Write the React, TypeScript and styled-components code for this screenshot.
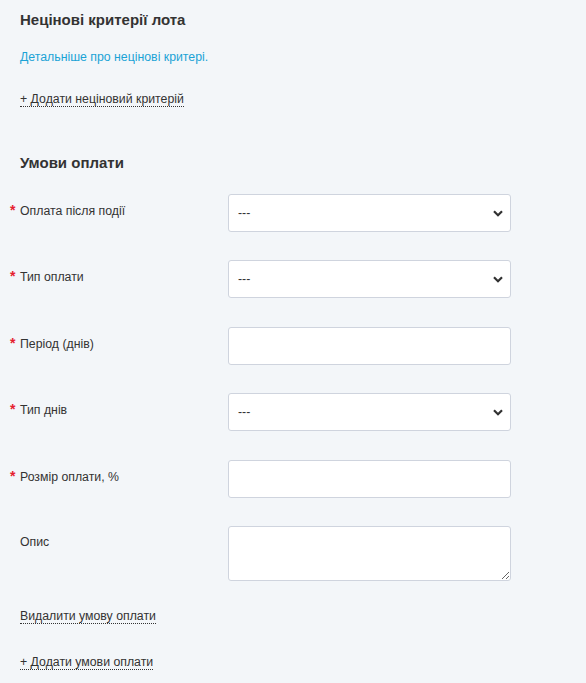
import * as React from 'react'
import styled, { createGlobalStyle } from 'styled-components'

const GlobalStyle = createGlobalStyle`
  html, body {
    margin: 0;
    padding: 0;
    background: #f3f6f9;
  }
  body {
    font-family: "Liberation Sans", Arial, sans-serif;
    color: #333;
  }
`

const Page = styled.div`
  padding: 11px 20px 20px 20px;
  min-height: 683px;
  box-sizing: border-box;
`

const Title = styled.h3<{ $top?: number }>`
  margin: ${(p) => p.$top ?? 0}px 0 0 0;
  font-size: 15px;
  line-height: 18px;
  font-weight: bold;
  color: #333;
`

const InfoLink = styled.a`
  display: block;
  margin-top: 20px;
  font-size: 12.3px;
  line-height: 16px;
  color: #1ba3d6;
  text-decoration: none;
`

const ActionRow = styled.div<{ $top: number }>`
  margin-top: ${(p) => p.$top}px;
  font-size: 12.3px;
  line-height: 16px;
`

const DottedLink = styled.span`
  color: #333;
  border-bottom: 1px dotted #333;
  cursor: pointer;
`

const Form = styled.div`
  margin-top: 22px;
  display: flex;
  flex-direction: column;
  gap: 28.4px;
`

const Row = styled.div`
  display: grid;
  grid-template-columns: 208px 283px;
  align-items: start;
`

const Label = styled.label`
  padding-top: 8px;
  font-size: 12.3px;
  line-height: 16px;
  color: #333;
`

const Required = styled.span`
  display: inline-block;
  width: 10px;
  margin-left: -10px;
  color: #e5202e;
  font-weight: bold;
  font-size: 14px;
`

const fieldBase = `
  box-sizing: border-box;
  width: 283px;
  background: #fff;
  border: 1px solid #cfd4de;
  border-radius: 3px;
  font-family: "Liberation Sans", Arial, sans-serif;
  font-size: 12.3px;
  color: #333;
  outline: none;
`

const Select = styled.select`
  ${fieldBase}
  height: 38px;
  padding: 0 30px 0 9px;
  appearance: none;
  -webkit-appearance: none;
  background-image: url("data:image/svg+xml,%3Csvg xmlns='http://www.w3.org/2000/svg' width='10' height='7' viewBox='0 0 10 7'%3E%3Cpath d='M1 1.2 L5 5.2 L9 1.2' fill='none' stroke='%23333' stroke-width='2.2'/%3E%3C/svg%3E");
  background-repeat: no-repeat;
  background-position: right 7px center;
`

const Input = styled.input`
  ${fieldBase}
  height: 38px;
  padding: 0 9px;
`

const TextArea = styled.textarea`
  ${fieldBase}
  height: 55px;
  padding: 6px 9px;
  resize: vertical;
  display: block;
`

type Field = { label: string; required: boolean; kind: 'select' | 'input' | 'textarea' }

const fields: Field[] = [
  { label: 'Оплата після події', required: true, kind: 'select' },
  { label: 'Тип оплати', required: true, kind: 'select' },
  { label: 'Період (днів)', required: true, kind: 'input' },
  { label: 'Тип днів', required: true, kind: 'select' },
  { label: 'Розмір оплати, %', required: true, kind: 'input' },
  { label: 'Опис', required: false, kind: 'textarea' },
]

export default function App() {
  return (
    <>
      <GlobalStyle />
      <Page>
        <Title>Нецінові критерії лота</Title>
        <InfoLink href="#">Детальніше про нецінові критері.</InfoLink>
        <ActionRow $top={26}>
          <DottedLink>+ Додати неціновий критерій</DottedLink>
        </ActionRow>

        <Title $top={47}>Умови оплати</Title>
        <Form>
          {fields.map((f) => (
            <Row key={f.label}>
              <Label>
                {f.required && <Required>*</Required>}
                {f.label}
              </Label>
              {f.kind === 'select' && (
                <Select defaultValue="">
                  <option value="">---</option>
                </Select>
              )}
              {f.kind === 'input' && <Input type="text" />}
              {f.kind === 'textarea' && <TextArea />}
            </Row>
          ))}
        </Form>

        <ActionRow $top={27}>
          <DottedLink>Видалити умову оплати</DottedLink>
        </ActionRow>
        <ActionRow $top={30}>
          <DottedLink>+ Додати умови оплати</DottedLink>
        </ActionRow>
      </Page>
    </>
  )
}
